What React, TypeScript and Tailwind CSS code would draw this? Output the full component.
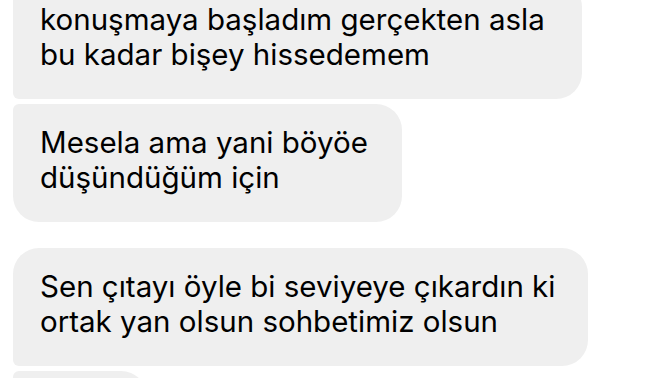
import React from "react";

interface Message {
  id: number;
  lines: string[];
  width: string;
  corners: string;
  gap: string;
}

const messages: Message[] = [
  {
    id: 1,
    lines: ["konuşmaya başladım gerçekten asla", "bu kadar bişey hissedemem"],
    width: "w-[569px]",
    corners: "rounded-tl-[6px] rounded-bl-[6px] rounded-tr-[26px] rounded-br-[26px]",
    gap: "",
  },
  {
    id: 2,
    lines: ["Mesela ama yani böyöe", "düşündüğüm için"],
    width: "w-[389px]",
    corners: "rounded-tl-[6px] rounded-bl-[26px] rounded-tr-[26px] rounded-br-[26px]",
    gap: "mt-[5px]",
  },
  {
    id: 3,
    lines: ["Sen çıtayı öyle bi seviyeye çıkardın ki", "ortak yan olsun sohbetimiz olsun"],
    width: "w-[575px]",
    corners: "rounded-tl-[26px] rounded-bl-[6px] rounded-tr-[26px] rounded-br-[26px]",
    gap: "mt-[26px]",
  },
];

export default function App() {
  return (
    <div className="w-[672px] h-[378px] overflow-hidden bg-white font-['Inter','Liberation_Sans',sans-serif]">
      <div className="flex flex-col items-start pl-[13px] -mt-[19px]">
        {messages.map((m) => (
          <div
            key={m.id}
            className={`${m.width} ${m.corners} ${m.gap} bg-[#efefef] px-[27px] pt-[21px] pb-[27px] text-[29.5px] leading-[35px] text-black`}
          >
            {m.lines.map((l, i) => (
              <div key={i} className="whitespace-nowrap">
                {l}
              </div>
            ))}
          </div>
        ))}
        {/* next bubble, only its top edge shows */}
        <div className="w-[134px] h-[60px] mt-[5px] bg-[#efefef] rounded-tl-[6px] rounded-tr-[26px]" />
      </div>
    </div>
  );
}
